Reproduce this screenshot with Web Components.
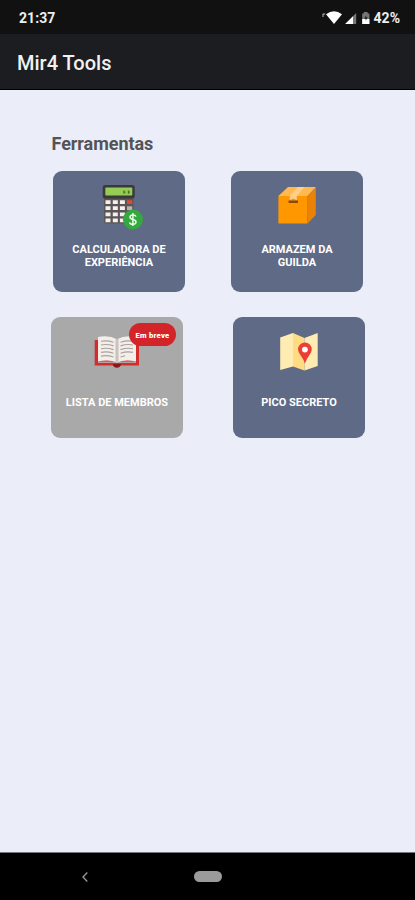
<!DOCTYPE html>
<html lang="pt-BR">
<head>
<meta charset="utf-8">
<title>Mir4 Tools</title>
<style>
html,body{margin:0;height:100%;background:#ebedf9}
body{font-family:Roboto,"Liberation Sans",sans-serif;overflow:hidden}
</style>
</head>
<body>
<mir-app></mir-app>
<script>
const define = (name, html) => {
  const t = document.createElement('template');
  t.innerHTML = html;
  customElements.define(name, class extends HTMLElement {
    constructor() {
      super();
      this.attachShadow({ mode: 'open' }).append(t.content.cloneNode(true));
    }
  });
};

define('status-bar', `
<style>
:host{display:flex;box-sizing:border-box;height:34px;padding:2px 15px 0 19px;align-items:center;background:#111112;color:#eee;font-size:14px;font-weight:700}
svg{margin-left:auto;margin-right:4px;display:block}
.time{letter-spacing:.05px}
.pct{letter-spacing:0}
</style>
<span class="time">21:37</span>
<svg width="48" height="16" viewBox="321 9 48 16">
<path d="M325 13.300Q333 7 341 13.300L333 23Z" fill="#fff"/>
<path d="M322 13v3M321.800 13h2.400" stroke="#bbb" stroke-width="1" fill="none"/>
<path d="M344.200 23L355.200 12V23Z" fill="#777"/>
<path d="M344.200 23L352 15.200V23Z" fill="#fff"/>
<path d="M362.800 11h3.800v1.600H368.400V23H361.200V12.600H362.800Z" fill="#777"/>
<path d="M361.200 18h7.200v5h-7.200Z" fill="#fff"/>
<path d="M365.200 14.300l-2 3.500h1.500v2l2-3.500h-1.500Z" fill="#222"/>
</svg>
<span class="pct">42%</span>`);

define('app-bar', `
<style>
:host{display:flex;box-sizing:border-box;height:56px;padding:2px 17px 0;align-items:center;background:#1b1d20;border-bottom:1px solid #000;color:#f1f1f1;font-size:20px;font-weight:500}
</style><slot></slot>`);

define('tool-card', `
<style>
:host{display:flex;position:relative;box-sizing:border-box;width:132px;height:121px;border-radius:9px;background:#5f6a86;flex-direction:column;align-items:center;color:#fff}
:host([disabled]){background:#a9a9a9}
.icon{height:62px;padding-top:14px;box-sizing:border-box;display:flex}
.label{text-align:center;font-size:11px;font-weight:700;line-height:13px;padding-top:10px;white-space:nowrap}
:host([single]) .label{padding-top:17px}
</style>
<div class="icon"><slot name="icon"></slot></div>
<div class="label"><slot></slot></div>
<slot name="badge"></slot>`);

define('soon-badge', `
<style>
:host{position:absolute;right:7px;top:6px;width:47px;height:23px;border-radius:12px;background:#d32529;display:flex;align-items:center;justify-content:center;color:#fff;font-size:7.600px;font-weight:900;letter-spacing:.25px;padding-top:1px;box-sizing:border-box;white-space:nowrap}
</style><slot></slot>`);

define('icon-calculator', `
<style>:host{display:block;padding-left:8px}svg{display:block}</style>
<svg width="42" height="46" viewBox="102 185 42 46">
<path d="M104 195H133.500V223.500H106Q104 223.500 104 221.500Z" fill="#5b5655"/>
<rect x="102.700" y="185" width="32" height="13.500" rx="2.500" fill="#39393a"/>
<rect x="105.300" y="187.600" width="27" height="8" rx=".8" fill="#96cb55"/>
<path d="M124 190.500v3.300M128.500 190.500v3.300M124 192.200h1.500M128.500 192.200h1.500" stroke="#497331" stroke-width="1.300"/>
<g fill="#f4f0ef">
<path d="M105.500 200.200h5v3.800h-5zM112.800 200.200h5v3.800h-5zM119.900 200.200h5v3.800h-5zM105.500 206.300h5v3.800h-5zM112.800 206.300h5v3.800h-5zM119.900 206.300h5v3.800h-5zM105.500 212.400h5v3.800h-5zM112.800 212.400h5v3.800h-5zM119.900 212.400h5v3.800h-5zM105.500 218.400h5v3.800h-5zM112.800 218.400h5v3.800h-5zM119.900 218.400h5v3.800h-5z"/></g>
<path d="M127 200.200h5.200v3.800H127z" fill="#e2473c"/><path d="M127 206.300h5.200v3.800H127z" fill="#b9b5b4"/>
<circle cx="132.900" cy="219.500" r="10" fill="#35a93f"/>
<path d="M136 216.600Q135.500 214.900 132.900 214.900Q130 214.900 130 217.100Q130 218.900 132.900 219.500Q136 220.100 136 222Q136 224.300 132.900 224.300Q130 224.300 129.600 222.300M132.900 213V226" fill="none" stroke="#e5ffe5" stroke-width="1.500"/>
</svg>`);

define('icon-box', `
<style>:host{display:block;padding-top:1px}svg{display:block}</style>
<svg width="38" height="38" viewBox="278 186 38 38">
<path d="M278.400 196H307.500V223.500H278.400Z" fill="#ff9800"/>
<path d="M307.500 196L315.800 187V215L307.500 223.500Z" fill="#e98205"/>
<path d="M278.400 196L288 187H315.800L307.500 196Z" fill="#ffb950"/>
<path d="M289.800 196L298 187H304.500L296.800 196V200L293.300 198.500L289.800 200Z" fill="#ffd08a"/>
<path d="M288.500 200.500h9.500v2.500h-9.500z" fill="#8b4a0b"/>
</svg>`);

define('icon-book', `
<style>:host{display:block;padding-top:4px}svg{display:block}</style>
<svg width="46" height="33" viewBox="94 335 46 33">
<path d="M94.700 340H139V365.500H94.700Z" fill="#d42b2d"/>
<path d="M112.800 364H121Q120.500 367.800 116.900 367.800Q113.200 367.800 112.800 364Z" fill="#8d1719"/>
<path d="M98 361.500H136V363H98Z" fill="#b5a29e"/>
<path d="M98 337Q109 335 117 339.200V362.500Q109 359 98 361.500Z" fill="#f3eeea"/>
<path d="M117 339.200Q125 335 136 337V361.500Q125 359 117 362.500Z" fill="#f3eeea"/>
<path d="M115.500 338.500L117 339.200L118.500 338.500V362L117 362.500L115.500 362Z" fill="#c9c2bf"/>
<path d="M101 341.300Q107 340 113.500 342.200M101 345Q107 343.700 113.500 345.900M101 348.700Q107 347.400 113.500 349.600M101 352.400Q107 351.100 113.500 353.300M101 356.100Q107 354.800 113.500 357M120.500 342.200Q127 340 133 341.300M120.500 345.900Q127 343.700 133 345M120.500 349.600Q127 347.400 133 348.700M120.500 353.300Q127 351.100 133 352.400M120.500 357L125 355.800" fill="none" stroke="#aaa19f" stroke-width="1.150"/>
</svg>`);

define('icon-map', `
<style>:host{display:block;padding-top:1px}svg{display:block}</style>
<svg width="38" height="39" viewBox="280 332 38 39">
<path d="M280.200 337.500L293 333V366.500L280.200 370Z" fill="#ffecb3"/>
<path d="M293 333L304.500 338V370.500L293 366.500Z" fill="#ffdc83"/>
<path d="M304.500 338L317.700 333V366L304.500 370.500Z" fill="#ffecb3"/>
<path d="M304.900 363.500Q303.500 359 300.500 355.300Q298 352 298 349.300A6.900 6.900 0 0 1 311.800 349.300Q311.800 352 309.300 355.300Q306.300 359.500 304.900 363.500Z" fill="#eb3e34"/>
<circle cx="304.900" cy="349.600" r="2.900" fill="#fff"/>
</svg>`);

define('nav-bar', `
<style>
:host{display:grid;grid-template-columns:170px 76px 1fr;box-sizing:border-box;height:48px;align-items:center;justify-items:center;background:#000;border-top:1px solid #77777a}
.home{width:28px;height:11px;border-radius:6px;background:#9b9b9b}
</style>
<svg width="8" height="12" viewBox="0 0 8 12"><path d="M6.300 1.500L2 6L6.300 10.500" fill="none" stroke="#929292" stroke-width="1.400"/></svg>
<span class="home"></span>`);

define('mir-app', `
<style>
:host{display:flex;flex-direction:column;height:900px;width:415px;background:#ebedf9}
main{flex:1;padding:43px 50px 0 51px}
h1{margin:0 0 16px .500px;font-size:18px;line-height:22px;font-weight:700;color:#545457;letter-spacing:-.05px}
.row{display:flex;justify-content:space-between}
.first{padding:0 2px 0 2px}
.second{margin-top:25px}
</style>
<status-bar></status-bar>
<app-bar>Mir4 Tools</app-bar>
<main>
<h1>Ferramentas</h1>
<div class="row first">
<tool-card><icon-calculator slot="icon"></icon-calculator>CALCULADORA DE<br>EXPERIÊNCIA</tool-card>
<tool-card><icon-box slot="icon"></icon-box>ARMAZEM DA<br>GUILDA</tool-card>
</div>
<div class="row second">
<tool-card single disabled><icon-book slot="icon"></icon-book>LISTA DE MEMBROS<soon-badge slot="badge">Em breve</soon-badge></tool-card>
<tool-card single><icon-map slot="icon"></icon-map>PICO SECRETO</tool-card>
</div>
</main>
<nav-bar></nav-bar>`);
</script>
</body>
</html>
